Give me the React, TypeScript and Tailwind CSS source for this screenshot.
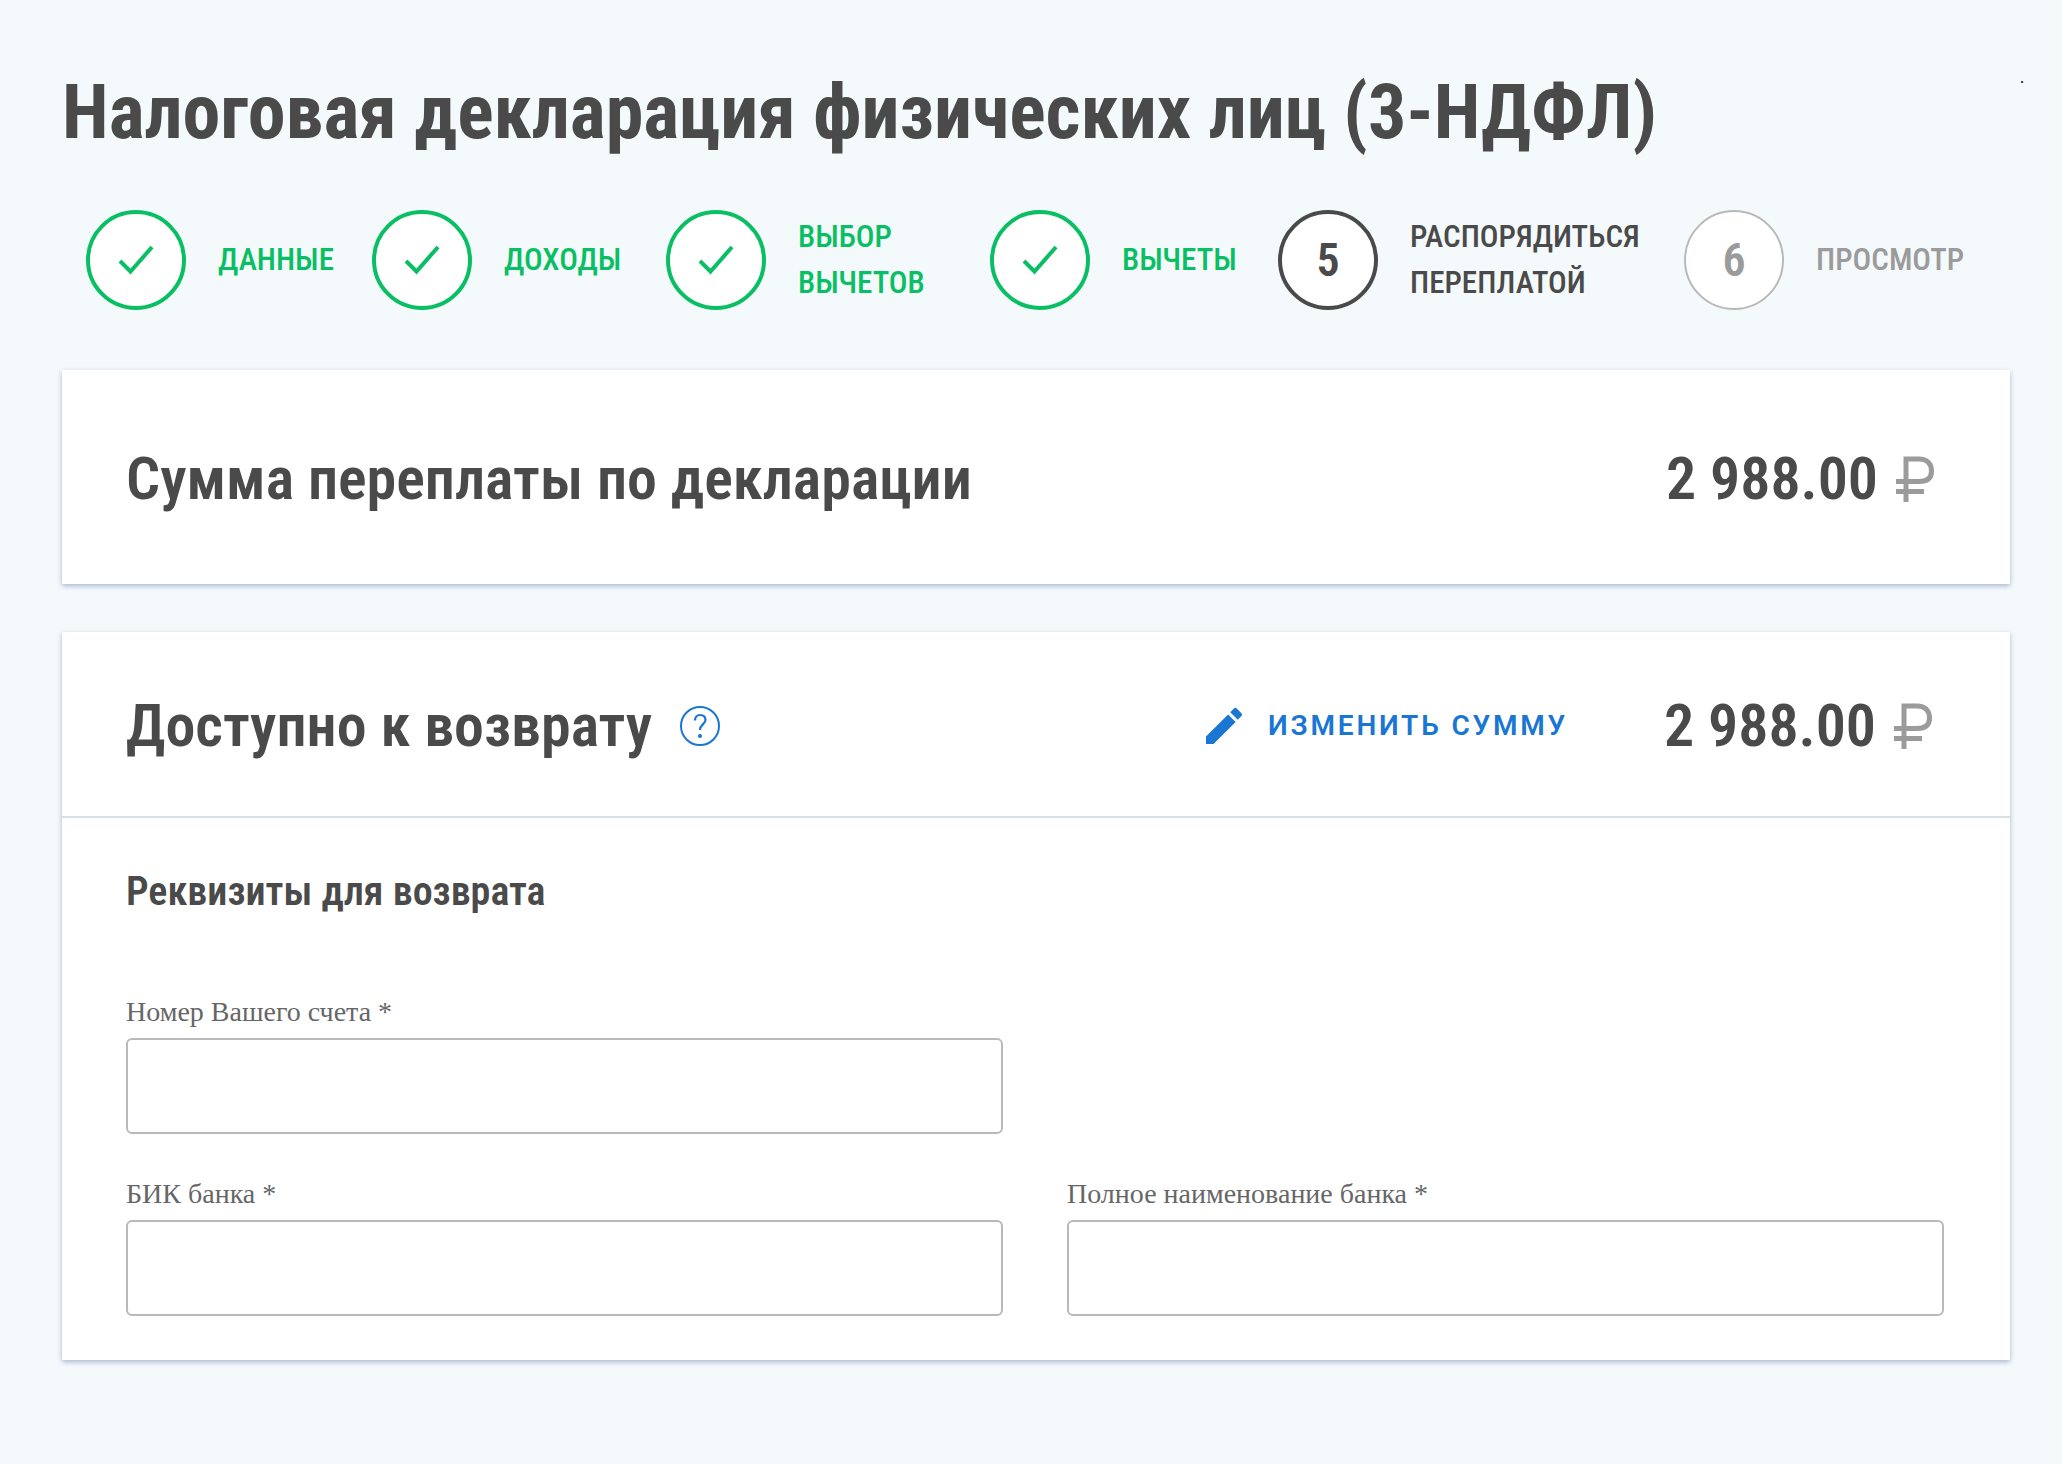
import { useState } from 'react'
import { MdEdit } from 'react-icons/md'

type StepStatus = 'done' | 'current' | 'upcoming'

interface Step {
  lines: string[]
  status: StepStatus
}

const steps: Step[] = [
  { lines: ['Данные'], status: 'done' },
  { lines: ['Доходы'], status: 'done' },
  { lines: ['Выбор', 'вычетов'], status: 'done' },
  { lines: ['Вычеты'], status: 'done' },
  { lines: ['Распорядиться', 'переплатой'], status: 'current' },
  { lines: ['Просмотр'], status: 'upcoming' },
]

const circleStyles: Record<StepStatus, string> = {
  done: 'border-4 border-[#0abf63] text-[#0abf63]',
  current: 'border-4 border-[#4a4a4a] text-[#4a4a4a]',
  upcoming: 'border-2 border-[#b9b9b9] text-[#9b9b9b]',
}

const labelStyles: Record<StepStatus, string> = {
  done: 'text-[#0abf63]',
  current: 'text-[#4a4a4a]',
  upcoming: 'text-[#9b9b9b]',
}

function CheckIcon() {
  return (
    <svg className="w-9 h-8" viewBox="0 0 36 32" fill="none" stroke="currentColor" strokeWidth={4}>
      <path d="M2 17L12.500 27.500L34 3" />
    </svg>
  )
}

function StepItem({ step, number }: { step: Step; number: number }) {
  return (
    <li className="flex items-center gap-8" aria-current={step.status === 'current' ? 'step' : undefined}>
      <span
        className={`flex size-[100px] shrink-0 items-center justify-center rounded-full bg-white text-[46px] font-semibold ${circleStyles[step.status]}`}
      >
        {step.status === 'done' ? <CheckIcon /> : number}
      </span>
      <span className={`text-[31px] leading-[46px] font-medium uppercase ${labelStyles[step.status]}`}>
        {step.lines.map((line) => (
          <span key={line} className="block">
            {line}
          </span>
        ))}
      </span>
    </li>
  )
}

function RubleIcon() {
  return (
    <svg className="w-[38px] h-[46px] text-[#9b9b9b]" viewBox="0 0 38 46" fill="none" stroke="currentColor" strokeWidth={5}>
      <path d="M10 46V3H23C31 3 35.500 8 35.500 15S31 25.500 23 25.500H0M0 35.500H28" />
    </svg>
  )
}

function Amount({ value }: { value: string }) {
  return (
    <div className="flex items-center gap-[18px]">
      <span className="text-[60px] leading-[72px] font-semibold">{value}</span>
      <RubleIcon />
    </div>
  )
}

function HelpIcon() {
  return (
    <svg className="size-10" viewBox="0 0 40 40" fill="none" stroke="currentColor" strokeWidth={2}>
      <circle cx="20" cy="20" r="19" />
      <path
        d="M15 14.500C15 11 17 9 20.200 9S25.500 11 25.500 14C25.500 18 20 18.500 20 24"
        strokeWidth={2.2}
      />
      <circle cx="20" cy="30" r="2" fill="currentColor" stroke="none" />
    </svg>
  )
}

interface FieldProps {
  id: string
  label: string
  value: string
  onChange: (value: string) => void
}

function Field({ id, label, value, onChange }: FieldProps) {
  return (
    <div>
      <label htmlFor={id} className="block font-['Liberation_Serif',serif] text-[28px] leading-8 text-[#666666]">
        {label} *
      </label>
      <input
        id={id}
        type="text"
        required
        value={value}
        onChange={(e) => onChange(e.target.value)}
        className="mt-[10px] h-24 w-full rounded-md border-2 border-[#b9b9b9] bg-white px-6 text-[32px] outline-none focus:border-[#1976d2]"
      />
    </div>
  )
}

export default function App() {
  const [account, setAccount] = useState('')
  const [bik, setBik] = useState('')
  const [bankName, setBankName] = useState('')

  return (
    <div className="min-h-screen bg-[#f4f9fc] pt-16 pr-[52px] pb-24 pl-[62px] font-['Roboto_Condensed',sans-serif] text-[#4a4a4a]">
      <header className="flex items-start justify-between">
        <h1 className="text-[76px] leading-[96px] font-bold">Налоговая декларация физических лиц (3-НДФЛ)</h1>
        <span className="-mr-3.5 font-['Liberation_Serif',serif] text-base leading-7 text-black">.</span>
      </header>

      {/* Steps */}
      <ol className="mt-[50px] grid grid-cols-[286fr_294fr_324fr_288fr_406fr_326fr] pl-6">
        {steps.map((step, index) => (
          <StepItem key={step.lines[0]} step={step} number={index + 1} />
        ))}
      </ol>

      {/* Overpayment total */}
      <section className="mt-[60px] flex items-center justify-between bg-white pt-[73px] pr-[76px] pb-[69px] pl-16 shadow-[0_2px_5px_#a9b6cf]">
        <h2 className="text-[60px] leading-[72px] font-semibold">Сумма переплаты по декларации</h2>
        <Amount value="2 988.00" />
      </section>

      {/* Refund */}
      <section className="mt-12 bg-white shadow-[0_2px_5px_#a9b6cf]">
        <div className="flex items-center border-b-2 border-[#d9e0e4] pt-[58px] pr-[78px] pb-[54px] pl-16">
          <h2 className="text-[60px] leading-[72px] font-semibold">Доступно к возврату</h2>
          <button type="button" aria-label="Справка" className="ml-7 text-[#1976d2]">
            <HelpIcon />
          </button>
          <button
            type="button"
            className="mr-24 ml-auto flex items-center gap-5 font-['Roboto',sans-serif] text-[28px] font-semibold tracking-widest text-[#1976d2] uppercase"
          >
            <MdEdit className="size-12" />
            Изменить сумму
          </button>
          <Amount value="2 988.00" />
        </div>

        <form className="pt-12 pr-[66px] pb-11 pl-16">
          <h3 className="text-[40px] leading-[52px] font-semibold">Реквизиты для возврата</h3>
          <div className="mt-[78px] grid grid-cols-2 gap-x-16 gap-y-11">
            <Field id="account" label="Номер Вашего счета" value={account} onChange={setAccount} />
            <div className="col-start-1">
              <Field id="bik" label="БИК банка" value={bik} onChange={setBik} />
            </div>
            <Field id="bank-name" label="Полное наименование банка" value={bankName} onChange={setBankName} />
          </div>
        </form>
      </section>
    </div>
  )
}
